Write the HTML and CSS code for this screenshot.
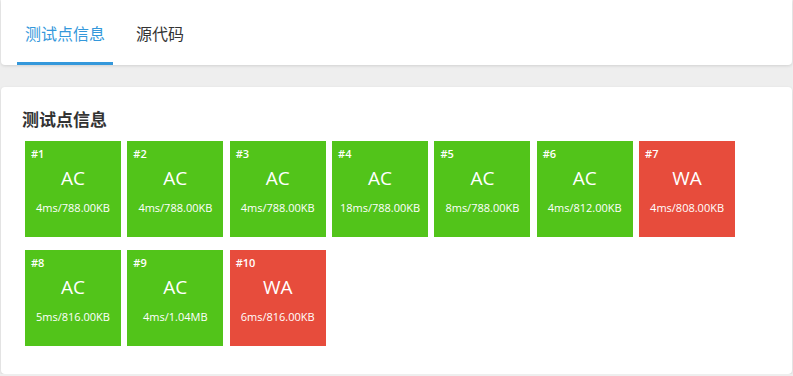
FILE: index.html
```html
<!DOCTYPE html>
<html>
<head>
    <meta charset="utf-8">
    <title>测试点信息</title>
    <link rel="stylesheet" href="styles.css">
</head>
<body>
    <div class="page">
        <div class="card tabs-card">
            <div class="tabs">
                <div class="tab active">测试点信息</div>
                <div class="tab">源代码</div>
            </div>
        </div>

        <div class="card cases-card">
            <h3>测试点信息</h3>
            <div class="cases">
                <div class="case ac"><div class="case-id">#1</div><div class="case-status">AC</div><div class="case-usage">4ms/788.00KB</div></div>
                <div class="case ac"><div class="case-id">#2</div><div class="case-status">AC</div><div class="case-usage">4ms/788.00KB</div></div>
                <div class="case ac"><div class="case-id">#3</div><div class="case-status">AC</div><div class="case-usage">4ms/788.00KB</div></div>
                <div class="case ac"><div class="case-id">#4</div><div class="case-status">AC</div><div class="case-usage">18ms/788.00KB</div></div>
                <div class="case ac"><div class="case-id">#5</div><div class="case-status">AC</div><div class="case-usage">8ms/788.00KB</div></div>
                <div class="case ac"><div class="case-id">#6</div><div class="case-status">AC</div><div class="case-usage">4ms/812.00KB</div></div>
                <div class="case wa"><div class="case-id">#7</div><div class="case-status">WA</div><div class="case-usage">4ms/808.00KB</div></div>
                <div class="case ac"><div class="case-id">#8</div><div class="case-status">AC</div><div class="case-usage">5ms/816.00KB</div></div>
                <div class="case ac"><div class="case-id">#9</div><div class="case-status">AC</div><div class="case-usage">4ms/1.04MB</div></div>
                <div class="case wa"><div class="case-id">#10</div><div class="case-status">WA</div><div class="case-usage">6ms/816.00KB</div></div>
            </div>
        </div>
    </div>
</body>
</html>
```

FILE: styles.css
```css
body {
    margin: 0;
    background: #eeeeee;
    font-family: "Open Sans", "Noto Sans CJK SC", sans-serif;
    color: #333;
}

.page {
    padding: 0 1px;
    display: flex;
    flex-direction: column;
    gap: 22px;
}

.card {
    background: white;
    border-radius: 4px;
    box-shadow: 0 1px 3px rgba(0,0,0,0.12);
}

.tabs-card {
    height: 65px;
    border-top-left-radius: 0;
    border-top-right-radius: 0;
}

.tabs {
    display: flex;
    gap: 15px;
    padding-left: 16px;
    height: 100%;
}

.tab {
    display: flex;
    align-items: center;
    padding: 3px 8px 0 8px;
    font-family: "Noto Sans CJK SC", sans-serif;
    font-size: 16px;
    color: #333;
    border-bottom: 3px solid transparent;
    box-sizing: border-box;
}

.tab.active {
    color: #3498db;
    border-bottom-color: #3498db;
}

.cases-card {
    height: 287px;
    padding: 18px 0 0 21px;
    box-sizing: border-box;
}

h3 {
    margin: 0 0 8px 0;
    font-family: "Noto Sans CJK SC", sans-serif;
    font-size: 17px;
    font-weight: bold;
    line-height: 28px;
    color: #333;
}

.cases {
    display: flex;
    flex-wrap: wrap;
    width: 720px;
    column-gap: 6.35px;
    row-gap: 13px;
    padding-left: 3px;
}

.case {
    width: 96px;
    height: 96px;
    color: white;
    display: flex;
    flex-direction: column;
    padding: 5px 6px;
    box-sizing: border-box;
}

.case.ac {
    background: #52c41a;
}

.case.wa {
    background: #e74c3c;
}

.case-id {
    font-size: 11px;
    font-weight: 600;
    line-height: 15px;
}

.case-status {
    text-align: center;
    font-size: 19px;
    line-height: 26px;
    margin-top: 4px;
}

.case-usage {
    text-align: center;
    font-size: 11px;
    line-height: 16px;
    margin-top: 9px;
}
```
